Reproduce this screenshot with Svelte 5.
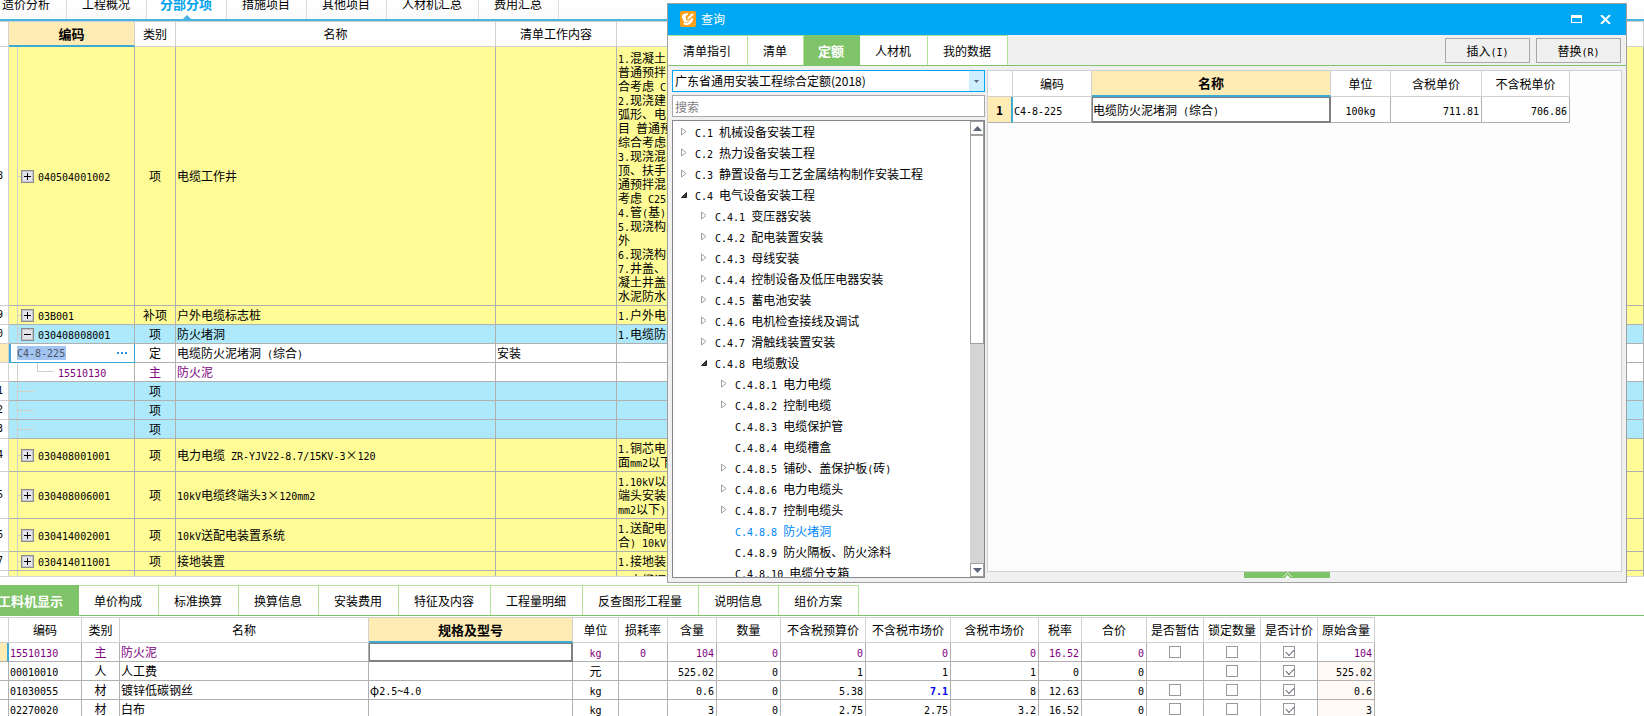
<script>
  const navTabs = ['造价分析', '工程概况', '分部分项', '措施项目', '其他项目', '人材机汇总', '费用汇总']

  const items = [
    {
      no: '8', code: '040504001002', type: '项', name: '电缆工作井', kind: 'bill', tree: 'plus', tall: true,
      feature: [
        '1.混凝土', '普通预拌', '合考虑 C', '2.现浇建', '弧形、电', '目 普通预', '综合考虑', '3.现浇混', '顶、扶手',
        '通预拌混', '考虑 C25', '4.管(基)', '5.现浇构', '外', '6.现浇构', '7.井盖、', '凝土井盖', '水泥防水',
      ],
    },
    { no: '9', code: '03B001', type: '补项', name: '户外电缆标志桩', kind: 'bill', tree: 'plus', feature: ['1.户外电'] },
    { no: '10', code: '030408008001', type: '项', name: '防火堵洞', kind: 'blue', tree: 'minus', feature: ['1.电缆防'] },
    { no: '', code: 'C4-8-225', type: '定', name: '电缆防火泥堵洞 (综合)', work: '安装', kind: 'plain', tree: 'edit' },
    { no: '', code: '15510130', type: '主', name: '防火泥', kind: 'plain material', tree: 'child' },
    { no: '11', type: '项', kind: 'blue', tree: 'line' },
    { no: '12', type: '项', kind: 'blue', tree: 'line' },
    { no: '13', type: '项', kind: 'blue', tree: 'line' },
    { no: '14', code: '030408001001', type: '项', name: '电力电缆 ZR-YJV22-8.7/15KV-3×120', kind: 'bill', tree: 'plus', feature: ['1.铜芯电', '面mm2以下'] },
    { no: '15', code: '030408006001', type: '项', name: '10kV电缆终端头3×120mm2', kind: 'bill', tree: 'plus', feature: ['1.10kV以', '端头安装', 'mm2以下)'] },
    { no: '16', code: '030414002001', type: '项', name: '10kV送配电装置系统', kind: 'bill', tree: 'plus', feature: ['1.送配电', '合) 10kV'] },
    { no: '17', code: '030414011001', type: '项', name: '接地装置', kind: 'bill', tree: 'plus', feature: ['1.接地装'] },
    { no: '', kind: 'bill', tree: 'none', feature: ['1.电缆调'] },
  ]

  const queryTabs = ['清单指引', '清单', '定额', '人材机', '我的数据']

  const chapters = [
    { level: 0, label: 'C.1 机械设备安装工程', state: 'closed' },
    { level: 0, label: 'C.2 热力设备安装工程', state: 'closed' },
    { level: 0, label: 'C.3 静置设备与工艺金属结构制作安装工程', state: 'closed' },
    { level: 0, label: 'C.4 电气设备安装工程', state: 'open' },
    { level: 1, label: 'C.4.1 变压器安装', state: 'closed' },
    { level: 1, label: 'C.4.2 配电装置安装', state: 'closed' },
    { level: 1, label: 'C.4.3 母线安装', state: 'closed' },
    { level: 1, label: 'C.4.4 控制设备及低压电器安装', state: 'closed' },
    { level: 1, label: 'C.4.5 蓄电池安装', state: 'closed' },
    { level: 1, label: 'C.4.6 电机检查接线及调试', state: 'closed' },
    { level: 1, label: 'C.4.7 滑触线装置安装', state: 'closed' },
    { level: 1, label: 'C.4.8 电缆敷设', state: 'open' },
    { level: 2, label: 'C.4.8.1 电力电缆', state: 'closed' },
    { level: 2, label: 'C.4.8.2 控制电缆', state: 'closed' },
    { level: 2, label: 'C.4.8.3 电缆保护管' },
    { level: 2, label: 'C.4.8.4 电缆槽盒' },
    { level: 2, label: 'C.4.8.5 铺砂、盖保护板(砖)', state: 'closed' },
    { level: 2, label: 'C.4.8.6 电力电缆头', state: 'closed' },
    { level: 2, label: 'C.4.8.7 控制电缆头', state: 'closed' },
    { level: 2, label: 'C.4.8.8 防火堵洞' },
    { level: 2, label: 'C.4.8.9 防火隔板、防火涂料' },
    { level: 2, label: 'C.4.8.10 电缆分支箱' },
  ]

  const detailTabs = ['工料机显示', '单价构成', '标准换算', '换算信息', '安装费用', '特征及内容', '工程量明细', '反查图形工程量', '说明信息', '组价方案']

  const detailCols = [
    { title: '编码', width: 73 },
    { title: '类别', width: 38, align: 'mid' },
    { title: '名称', width: 249 },
    { title: '规格及型号', width: 204 },
    { title: '单位', width: 46, align: 'mid' },
    { title: '损耗率', width: 49, align: 'mid' },
    { title: '含量', width: 49, align: 'end' },
    { title: '数量', width: 64, align: 'end' },
    { title: '不含税预算价', width: 85, align: 'end' },
    { title: '不含税市场价', width: 85, align: 'end' },
    { title: '含税市场价', width: 88, align: 'end' },
    { title: '税率', width: 43, align: 'end' },
    { title: '合价', width: 65, align: 'end' },
    { title: '是否暂估', width: 57, align: 'mid' },
    { title: '锁定数量', width: 57, align: 'mid' },
    { title: '是否计价', width: 57, align: 'mid' },
    { title: '原始含量', width: 57, align: 'end' },
  ]

  let materials = $state([
    ['15510130', '主', '防火泥', '', 'kg', '0', '104', '0', '0', '0', '0', '16.52', '0', false, false, true, '104'],
    ['00010010', '人', '人工费', '', '元', '', '525.02', '0', '1', '1', '1', '0', '0', '', false, true, '525.02'],
    ['01030055', '材', '镀锌低碳钢丝', 'φ2.5~4.0', 'kg', '', '0.6', '0', '5.38', '7.1', '8', '12.63', '0', false, false, true, '0.6'],
    ['02270020', '材', '白布', '', 'kg', '', '3', '0', '2.75', '2.75', '3.2', '16.52', '0', false, false, true, '3'],
  ])

  let activeNav = $state(2)
  let activeQuery = $state(2)
  let activeDetail = $state(0)
  let activeChapter = $state(19)
  let keyword = $state('')
  let editCode = $state('C4-8-225')
</script>

<!-- half-width runs get the narrow monospaced face -->
{#snippet mixed(text)}{#each (text ?? '').split(/([\x20-\x7e]+)/) as part, i}{#if i % 2}<span class="half">{part}</span>{:else}{part}{/if}{/each}{/snippet}

<div class="app">
  <nav class="top-nav">
    {#each navTabs as tab, i}
      <button class:active={activeNav === i} onclick={() => (activeNav = i)}>{tab}</button>
    {/each}
  </nav>

  <main class="bill">
    <table>
      <colgroup>
        <col class="w-no" /><col class="w-code" /><col class="w-type" /><col class="w-name" /><col class="w-work" /><col />
      </colgroup>
      <thead>
        <tr>
          <th></th>
          <th class="current">编码</th>
          <th>类别</th>
          <th>名称</th>
          <th>清单工作内容</th>
          <th></th>
        </tr>
      </thead>
      <tbody>
        {#each items as item}
          <tr class={item.kind} class:tall={item.tall}>
            <td class="no" class:marked={item.tree === 'edit'}><div>{@render mixed(item.no)}</div></td>
            {#if item.tree === 'edit'}
              <td class="editing">
                <div class="editor">
                  <input class="half" aria-label="编码" bind:value={editCode} />
                  <button aria-label="更多">
                    <svg width="10" height="2" viewBox="0 0 10 2"><path d="M0 0h2v2H0zM4 0h2v2H4zM8 0h2v2H8z" fill="#2f8fd8" /></svg>
                  </button>
                </div>
              </td>
            {:else}
              <td class="code">
                <div class="tree-cell {item.tree}">
                  <i></i>
                  {#if item.tree === 'plus' || item.tree === 'minus'}
                    <button class="expander" aria-label="展开">
                      <svg width="7" height="7" viewBox="0 0 7 7">
                        <path d={item.tree === 'plus' ? 'M0 3h7v1H0zM3 0h1v7H3z' : 'M0 3h7v1H0z'} fill="#000" />
                      </svg>
                    </button>
                  {/if}
                  <span>{@render mixed(item.code)}</span>
                </div>
              </td>
            {/if}
            <td class="mid">{item.type}</td>
            <td>{@render mixed(item.name)}</td>
            <td>{item.work}</td>
            <td>{#each item.feature ?? [] as line}<div>{@render mixed(line)}</div>{/each}</td>
          </tr>
        {/each}
      </tbody>
    </table>
  </main>

  <section class="detail">
    <nav class="green-tabs">
      {#each detailTabs as tab, i}
        <button class:active={activeDetail === i} onclick={() => (activeDetail = i)}>{tab}</button>
      {/each}
    </nav>
    <table>
      <colgroup>
        <col class="w-no" />
        {#each detailCols as col}<col style="width: {col.width}px" />{/each}
      </colgroup>
      <thead>
        <tr>
          <th></th>
          {#each detailCols as col, c}<th class:current={c === 3}>{col.title}</th>{/each}
        </tr>
      </thead>
      <tbody>
        {#each materials as row, r}
          <tr class:material={r === 0}>
            <td class="no" class:marked={r === 0} class:bar={r === 0}></td>
            {#each row as value, c}
              <td
                class={detailCols[c].align}
                class:selected={r === 0 && c === 3}
                class:edited={r === 2 && c === 9}
                class:origin={r > 0 && c === 16}
              >
                {#if typeof value === 'boolean'}
                  <input type="checkbox" aria-label={detailCols[c].title} bind:checked={materials[r][c]} />
                {:else}{@render mixed(value)}{/if}
              </td>
            {/each}
          </tr>
        {/each}
      </tbody>
    </table>
  </section>

  <div class="dialog" role="dialog" aria-label="查询">
    <header>
      <svg width="16" height="16" viewBox="0 0 16 16">
        <rect width="16" height="16" rx="2" fill="#f9a11b" />
        <path d="M2 4.500C4 2.500 6 2 8.500 2.500L5.500 6l1 3.500L10 9l3-2.500c.5 3-1 5.500-4 7-2 .8-4.500.8-6-.5 1.500-1 1.500-2 .5-3.500S1.500 6 2 4.500z" fill="#fff" />
        <path d="M7 8.500l.5-2L12 2l2 1.500L9.500 8z" fill="#fff" stroke="#f9a11b" stroke-width=".6" />
        <path d="M5 11.500c2 0 3.500-.5 5-2" fill="none" stroke="#f9a11b" stroke-width=".8" />
      </svg>
      <h2>查询</h2>
      <button aria-label="最大化">
        <svg width="11" height="8" viewBox="0 0 11 8"><path d="M0 0h11v8H0zM1 3v4h9V3z" fill="#fff" fill-rule="evenodd" /></svg>
      </button>
      <button aria-label="关闭">
        <svg width="11" height="9" viewBox="0 0 11 9"><path d="M1 0l9 9M10 0L1 9" stroke="#fff" stroke-width="2" /></svg>
      </button>
    </header>

    <div class="toolbar">
      <nav class="green-tabs">
        {#each queryTabs as tab, i}
          <button class:active={activeQuery === i} onclick={() => (activeQuery = i)}>{tab}</button>
        {/each}
      </nav>
      <div class="actions">
        <button>{@render mixed('插入(I)')}</button>
        <button>{@render mixed('替换(R)')}</button>
      </div>
    </div>

    <div class="panes">
      <div class="library">
        <div class="picker">
          <select aria-label="定额库">
            <option>广东省通用安装工程综合定额(2018)</option>
          </select>
          <svg width="5" height="3" viewBox="0 0 5 3"><path d="M0 0h5L2.5 3z" fill="#5d6b7a" /></svg>
        </div>
        <input class="search" type="text" placeholder="搜索" aria-label="搜索" bind:value={keyword} />
        <div class="tree">
          <ul>
            {#each chapters as chapter, i}
              <li class="level-{chapter.level}">
                <span class="arrow">
                  {#if chapter.state === 'closed'}
                    <svg width="6" height="9" viewBox="0 0 6 9"><path d="M.5 1v7L5 4.500z" fill="#fff" stroke="#a0a0a0" /></svg>
                  {:else if chapter.state === 'open'}
                    <svg width="6" height="6" viewBox="0 0 6 6"><path d="M5.500.5v5h-5z" fill="#404040" stroke="#222" /></svg>
                  {/if}
                </span>
                <button class:active={activeChapter === i} onclick={() => (activeChapter = i)}>{@render mixed(chapter.label)}</button>
              </li>
            {/each}
          </ul>
          <div class="scrollbar">
            <button aria-label="向上"><svg width="9" height="5" viewBox="0 0 9 5"><path d="M0 5h9L4.500 0z" fill="#5f6578" /></svg></button>
            <div class="thumb"></div>
            <button aria-label="向下"><svg width="9" height="5" viewBox="0 0 9 5"><path d="M0 0h9L4.500 5z" fill="#5f6578" /></svg></button>
          </div>
        </div>
      </div>

      <div class="result">
        <div class="result-body">
          <table>
            <thead>
              <tr>
                <th class="r-no"></th>
                <th class="r-code">编码</th>
                <th class="r-name current">名称</th>
                <th class="r-unit">单位</th>
                <th class="r-tax">含税单价</th>
                <th class="r-net">不含税单价</th>
              </tr>
            </thead>
            <tbody>
              <tr>
                <td class="marked bar mid"><b>1</b></td>
                <td>{@render mixed('C4-8-225')}</td>
                <td class="selected">{@render mixed('电缆防火泥堵洞 (综合)')}</td>
                <td class="mid">{@render mixed('100kg')}</td>
                <td class="end">{@render mixed('711.81')}</td>
                <td class="end">{@render mixed('706.86')}</td>
              </tr>
            </tbody>
          </table>
        </div>
        <button class="handle" aria-label="收起">
          <svg width="9" height="6" viewBox="0 0 9 6"><path d="M0 5l4.500-4.500L9 5" fill="none" stroke="#d8efd0" /><path d="M2 6l2.500-3L7 6z" fill="#fff" /></svg>
        </button>
      </div>
    </div>
  </div>
</div>

<style>
  :global(body) {
    background: #fff;
  }

  .app {
    position: relative;
    display: flex;
    flex-direction: column;
    height: 100vh;
    overflow: hidden;
    font: 12px/14px 'Noto Sans CJK SC', sans-serif;
    color: #000;
  }

  .app :global(*) {
    box-sizing: border-box;
  }

  button,
  input,
  select {
    margin: 0;
    padding: 0;
    border: 0;
    border-radius: 0;
    background: none;
    font: inherit;
    color: inherit;
  }

  svg {
    display: block;
  }

  .half {
    font-family: 'DejaVu Sans Mono', monospace;
    font-size: 10px;
    line-height: 10px;
    white-space: pre;
  }

  .top-nav {
    display: flex;
    flex: none;
    height: 21px;
    margin-left: -13px;
    border-bottom: 2px solid #45b4e3;
    background: linear-gradient(#fff, #fafafa);
  }

  .top-nav button {
    position: relative;
    display: block;
    padding: 0 16px 11px 15px;
    border-right: 1px solid #dcdcdc;
    line-height: 8px;
    white-space: nowrap;
  }

  .top-nav .active {
    padding: 0 14px 11px 13px;
    background: #fff;
    font-size: 13px;
    font-weight: 700;
    color: #00a2ed;
  }

  .top-nav .active::after {
    content: '';
    position: absolute;
    left: 50%;
    bottom: 0;
    margin-left: -4px;
    border: 4px solid transparent;
    border-top: 0;
    border-bottom-color: #45b4e3;
  }

  table {
    border-collapse: separate;
    border-spacing: 0;
    table-layout: fixed;
  }

  th,
  td {
    padding: 2px 2px 2px 1px;
    border: 0 solid #b0b0b0;
    border-width: 0 1px 1px 0;
    text-align: left;
    white-space: nowrap;
    overflow: hidden;
  }

  th {
    height: 25px;
    padding: 0;
    border-color: #d0d0d0;
    background: #fff;
    font-weight: 400;
    text-align: center;
  }

  th.current {
    border-bottom: 2px solid #3fa9d5;
    background: #ffebb4;
    font-size: 13px;
    font-weight: 700;
  }

  .mid {
    padding: 2px 0;
    text-align: center;
  }

  .end {
    text-align: right;
  }

  .material {
    color: #800080;
  }

  td.marked {
    background: #ffebb4;
  }

  td.bar {
    border-right: 2px solid #3fa9d5;
  }

  td.selected {
    padding: 0;
    border: 2px solid #808080;
    border-top-width: 1px;
    border-left-width: 1px;
  }

  .bill {
    flex: 1;
    min-height: 0;
    overflow: hidden;
    border-top: 1px solid #d0d0d0;
    border-bottom: 1px solid #d8d8d8;
  }

  .bill table {
    width: 100%;
  }

  .w-no { width: 9px; }
  .w-code { width: 126px; }
  .w-type { width: 41px; }
  .w-name { width: 320px; }
  .w-work { width: 121px; }

  .bill td {
    height: 19px;
  }

  .bill .tall td:nth-child(6) {
    padding: 4px 1px 2px;
  }

  .bill td.no {
    padding: 0;
    border-color: #d0d0d0;
  }

  .no div {
    display: flex;
    justify-content: flex-end;
    padding-right: 5px;
  }

  .bill .bill td { background-color: #fffc98; }
  .bill .blue td { background-color: #ade8fb; }
  .bill .bill td.no,
  .bill .blue td.no { background-color: #fff; }

  .bill td.code {
    padding: 0;
    background-image: linear-gradient(#d0d0c4, #d0d0c4);
    background-position: 8px 0;
    background-size: 1px 100%;
    background-repeat: no-repeat;
  }

  .tree-cell {
    display: flex;
    align-items: center;
    padding-left: 9px;
  }

  .tree-cell i {
    width: 3px;
    height: 1px;
    background: #d0d0c4;
  }

  .tree-cell.line i { width: 16px; }
  .tree-cell.none i { width: 0; }

  .tree-cell.child {
    padding-left: 28px;
  }

  .tree-cell.child i {
    width: 17px;
    height: 9px;
    margin-bottom: 9px;
    border: solid #d0d0d0;
    border-width: 0 0 1px 1px;
    background: none;
  }

  .tree-cell.child span {
    margin-left: 2px;
  }

  .expander {
    display: flex;
    align-items: center;
    justify-content: center;
    width: 13px;
    height: 13px;
    margin-right: 4px;
    border: 1px solid #8c8c8c;
    background: #e4e4ea;
    box-shadow: inset 0 0 0 1px #c0c4cc;
  }

  .bill td.editing {
    padding: 0;
    border-color: #3fa9d5;
  }

  .editor {
    display: flex;
    align-items: center;
    justify-content: space-between;
    height: 18px;
    padding: 0 7px 0 6px;
    border-left: 2px solid #3fa9d5;
  }

  .editor input {
    width: 49px;
    height: 14px;
    background: #a3c3f0;
    color: #4a5664;
  }

  .detail {
    flex: 0 0 139px;
    padding-top: 8px;
    overflow: hidden;
  }

  .green-tabs {
    display: flex;
    height: 31px;
    border-bottom: 1px solid #7fc46c;
  }

  .green-tabs button {
    display: block;
    flex: none;
    padding: 0 16px 0 15px;
    border: solid #b2e59a;
    border-width: 1px 1px 0 0;
    background: #fff;
    white-space: nowrap;
  }

  .green-tabs button.active {
    padding: 0 15px 0 14px;
    border-color: #80c46a;
    background: #80c46a;
    font-size: 13px;
    font-weight: 700;
    color: #fff;
  }

  .detail .green-tabs button:first-child {
    margin-left: -16px;
  }

  .detail table {
    width: 1375px;
    margin-top: 1px;
    border-top: 1px solid #d0d0d0;
  }

  .detail td {
    height: 19px;
    padding-top: 0;
    padding-bottom: 0;
  }

  td.edited,
  td.edited :global(.half) {
    font-weight: 700;
    color: #0000f0;
  }

  td.origin {
    background: #fffaf5;
  }

  input[type='checkbox'] {
    appearance: none;
    display: block;
    width: 12px;
    height: 12px;
    margin: 0 auto;
    border: 1px solid #999;
    background: #fff;
  }

  input[type='checkbox']:checked::after {
    content: '';
    display: block;
    width: 7px;
    height: 4px;
    margin: 2px 0 0 2px;
    border: solid #5f6578;
    border-width: 0 0 1px 1px;
    transform: rotate(-45deg);
  }

  .dialog {
    position: absolute;
    inset: 3px 17px 133px 667px;
    display: flex;
    flex-direction: column;
    border: 1px solid #a0a0a0;
    background: #f0f0f0;
  }

  header {
    display: flex;
    align-items: center;
    flex: none;
    height: 31px;
    padding: 0 15px 1px 12px;
    background: #00a8f3;
    color: #fff;
  }

  h2 {
    flex: 1;
    margin: 0 0 0 5px;
    font-size: 12px;
    font-weight: 400;
  }

  header button + button {
    margin-left: 18px;
  }

  .toolbar {
    display: flex;
    flex: none;
    justify-content: space-between;
    border-bottom: 1px solid #7fc46c;
  }

  .toolbar .green-tabs {
    height: 30px;
    border-bottom: 0;
  }

  .actions {
    display: flex;
    gap: 6px;
    padding: 3px 5px 2px 0;
  }

  .actions button {
    width: 85px;
    height: 25px;
    border: 1px solid #a8a8a8;
  }

  .panes {
    display: flex;
    flex: 1;
    gap: 2px;
    min-height: 0;
    padding: 4px;
  }

  .library {
    display: flex;
    flex: 0 0 313px;
    flex-direction: column;
    gap: 3px;
  }

  .picker {
    display: flex;
    align-items: center;
    height: 22px;
    border: 1px solid #00a8f3;
    background: linear-gradient(#cdeeff, #cdeeff) right / 15px 100% no-repeat #fff;
  }

  .picker select {
    flex: 1;
    height: 20px;
    padding-left: 2px;
    appearance: none;
  }

  .picker svg {
    margin-right: 5px;
  }

  .search {
    height: 22px;
    padding-left: 2px;
    border: 1px solid #a8a8a8;
    background: #fff;
  }

  .search::placeholder {
    color: #808080;
  }

  .tree {
    display: flex;
    flex: 1;
    min-height: 0;
    border: 1px solid #828790;
    background: #fff;
    overflow: hidden;
  }

  ul {
    flex: 1;
    margin: 0;
    padding: 0 0 0 8px;
    list-style: none;
  }

  li {
    display: flex;
    align-items: center;
    height: 21px;
  }

  .level-1 { padding-left: 20px; }
  .level-2 { padding-left: 40px; }

  .arrow {
    width: 14px;
  }

  li button {
    white-space: nowrap;
  }

  li .active {
    color: #0088f8;
  }

  .scrollbar {
    display: flex;
    flex: none;
    flex-direction: column;
    width: 14px;
    background: #d4d4d4;
  }

  .scrollbar button {
    display: flex;
    align-items: center;
    justify-content: center;
    height: 14px;
    border: 1px solid #a0a0a0;
    background: #fff;
  }

  .thumb {
    height: 209px;
    border: 1px solid #a0a0a0;
    background: #fff;
  }

  .scrollbar button:last-child {
    margin-top: auto;
  }

  .result {
    display: flex;
    flex: 1;
    flex-direction: column;
    min-width: 0;
  }

  .result-body {
    flex: 1;
    border: 1px solid #d0d0d0;
    background: #fdfdfd;
  }

  .result table {
    width: 582px;
    background: #fff;
  }

  .result th {
    height: 26px;
  }

  .result td {
    height: 26px;
  }

  .r-no { width: 25px; }
  .r-code { width: 79px; }
  .r-name { width: 239px; }
  .r-unit { width: 60px; }
  .r-tax { width: 91px; }
  .r-net { width: 88px; }

  .handle {
    display: flex;
    justify-content: center;
    width: 86px;
    height: 6px;
    margin-left: 257px;
    background: #80c46a;
  }
</style>
